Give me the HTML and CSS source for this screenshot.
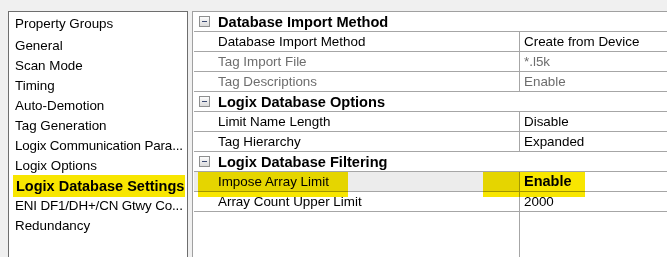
FILE: index.html
```html
<!DOCTYPE html>
<html>
<head>
<meta charset="utf-8">
<link rel="stylesheet" href="styles.css">
</head>
<body>
<div class="window">
  <div class="groups">
    <div class="group-title">Property Groups</div>
    <ul class="group-list">
      <li>General</li>
      <li>Scan Mode</li>
      <li>Timing</li>
      <li>Auto-Demotion</li>
      <li>Tag Generation</li>
      <li class="tight">Logix Communication Para...</li>
      <li>Logix Options</li>
      <li class="active"><span class="marker marker-group"></span>Logix Database Settings</li>
      <li class="tight">ENI DF1/DH+/CN Gtwy Co...</li>
      <li>Redundancy</li>
    </ul>
  </div>
  <div class="grid">
    <div class="cat"><svg class="toggle" width="11" height="11" viewBox="0 0 11 11"><defs><linearGradient id="g1" x1="0" y1="0" x2="0" y2="1"><stop offset="0" stop-color="#ffffff"/><stop offset="1" stop-color="#d8d8d8"/></linearGradient></defs><rect x="0.5" y="0.5" width="10" height="10" fill="url(#g1)" stroke="#8e8f8f"/><rect x="3" y="5" width="5" height="1" fill="#3b4a72"/></svg><span>Database Import Method</span></div>
    <div class="prop"><div class="name">Database Import Method</div><div class="value">Create from Device</div></div>
    <div class="prop disabled"><div class="name">Tag Import File</div><div class="value">*.l5k</div></div>
    <div class="prop disabled"><div class="name">Tag Descriptions</div><div class="value">Enable</div></div>
    <div class="cat"><svg class="toggle" width="11" height="11" viewBox="0 0 11 11"><rect x="0.5" y="0.5" width="10" height="10" fill="url(#g1)" stroke="#8e8f8f"/><rect x="3" y="5" width="5" height="1" fill="#3b4a72"/></svg><span>Logix Database Options</span></div>
    <div class="prop"><div class="name">Limit Name Length</div><div class="value">Disable</div></div>
    <div class="prop"><div class="name">Tag Hierarchy</div><div class="value">Expanded</div></div>
    <div class="cat"><svg class="toggle" width="11" height="11" viewBox="0 0 11 11"><rect x="0.5" y="0.5" width="10" height="10" fill="url(#g1)" stroke="#8e8f8f"/><rect x="3" y="5" width="5" height="1" fill="#3b4a72"/></svg><span>Logix Database Filtering</span></div>
    <div class="prop selected"><div class="name">Impose Array Limit</div><div class="value bold">Enable</div><span class="marker marker-name"></span><span class="marker marker-value"></span></div>
    <div class="prop"><div class="name">Array Count Upper Limit</div><div class="value">2000</div></div>
    <div class="filler"><div class="name"></div><div class="value"></div></div>
  </div>
</div>
</body>
</html>
```
FILE: styles.css
```css
html, body {
  margin: 0;
  padding: 0;
  background: #f0f0f0;
}
.window {
  display: flex;
  gap: 4px;
  height: 257px;
  box-sizing: border-box;
  padding: 11px 0 0 8px;
  overflow: hidden;
  font-family: "Liberation Sans", Arial, sans-serif;
  font-size: 13.4px;
  color: #000;
}
.groups {
  width: 180px;
  flex: none;
  box-sizing: border-box;
  background: #fff;
  border: 1px solid #6e6e6e;
  border-bottom: none;
  padding-top: 2px;
  overflow: hidden;
}
.group-title {
  line-height: 20px;
  padding-left: 6px;
  margin-bottom: 2px;
}
.group-list {
  list-style: none;
  margin: 0;
  padding: 0;
}
.group-list li {
  position: relative;
  line-height: 20px;
  height: 20px;
  padding-left: 6px;
  white-space: nowrap;
}
.group-list li.tight {
  letter-spacing: -0.15px;
}
.group-list li.active {
  font-weight: bold;
  font-size: 14.5px;
  padding-left: 7px;
}
.marker {
  position: absolute;
  background: #f8e600;
  mix-blend-mode: multiply;
  pointer-events: none;
  z-index: 2;
}
.marker-group {
  left: 4px;
  top: -1px;
  width: 172px;
  height: 22px;
}
.grid {
  flex: 1;
  display: flex;
  flex-direction: column;
  background: #fff;
  border-top: 1px solid #a0a0a0;
  border-left: 1px solid #a0a0a0;
  padding-left: 1px;
}
.cat {
  display: flex;
  align-items: center;
  height: 20px;
  box-sizing: border-box;
  border-bottom: 1px solid #a6a6a6;
  font-weight: bold;
  font-size: 14.6px;
}
.toggle {
  margin-left: 5px;
  margin-right: 8px;
  flex: none;
}
.prop, .filler {
  position: relative;
  display: grid;
  grid-template-columns: 326px 1fr;
}
.prop {
  height: 20px;
  box-sizing: border-box;
  border-bottom: 1px solid #a6a6a6;
  line-height: 19px;
}
.filler {
  flex: 1;
}
.name {
  box-sizing: border-box;
  border-right: 1px solid #a6a6a6;
  padding-left: 24px;
  white-space: nowrap;
}
.value {
  padding-left: 4px;
  white-space: nowrap;
}
.value.bold {
  font-weight: bold;
  font-size: 14.5px;
}
.disabled {
  color: #6d6d6d;
}
.selected .name {
  background: #ececec;
}
.marker-name {
  left: 4px;
  top: 0;
  width: 150px;
  height: 25px;
}
.marker-value {
  left: 289px;
  top: 0;
  width: 102px;
  height: 25px;
}
```
